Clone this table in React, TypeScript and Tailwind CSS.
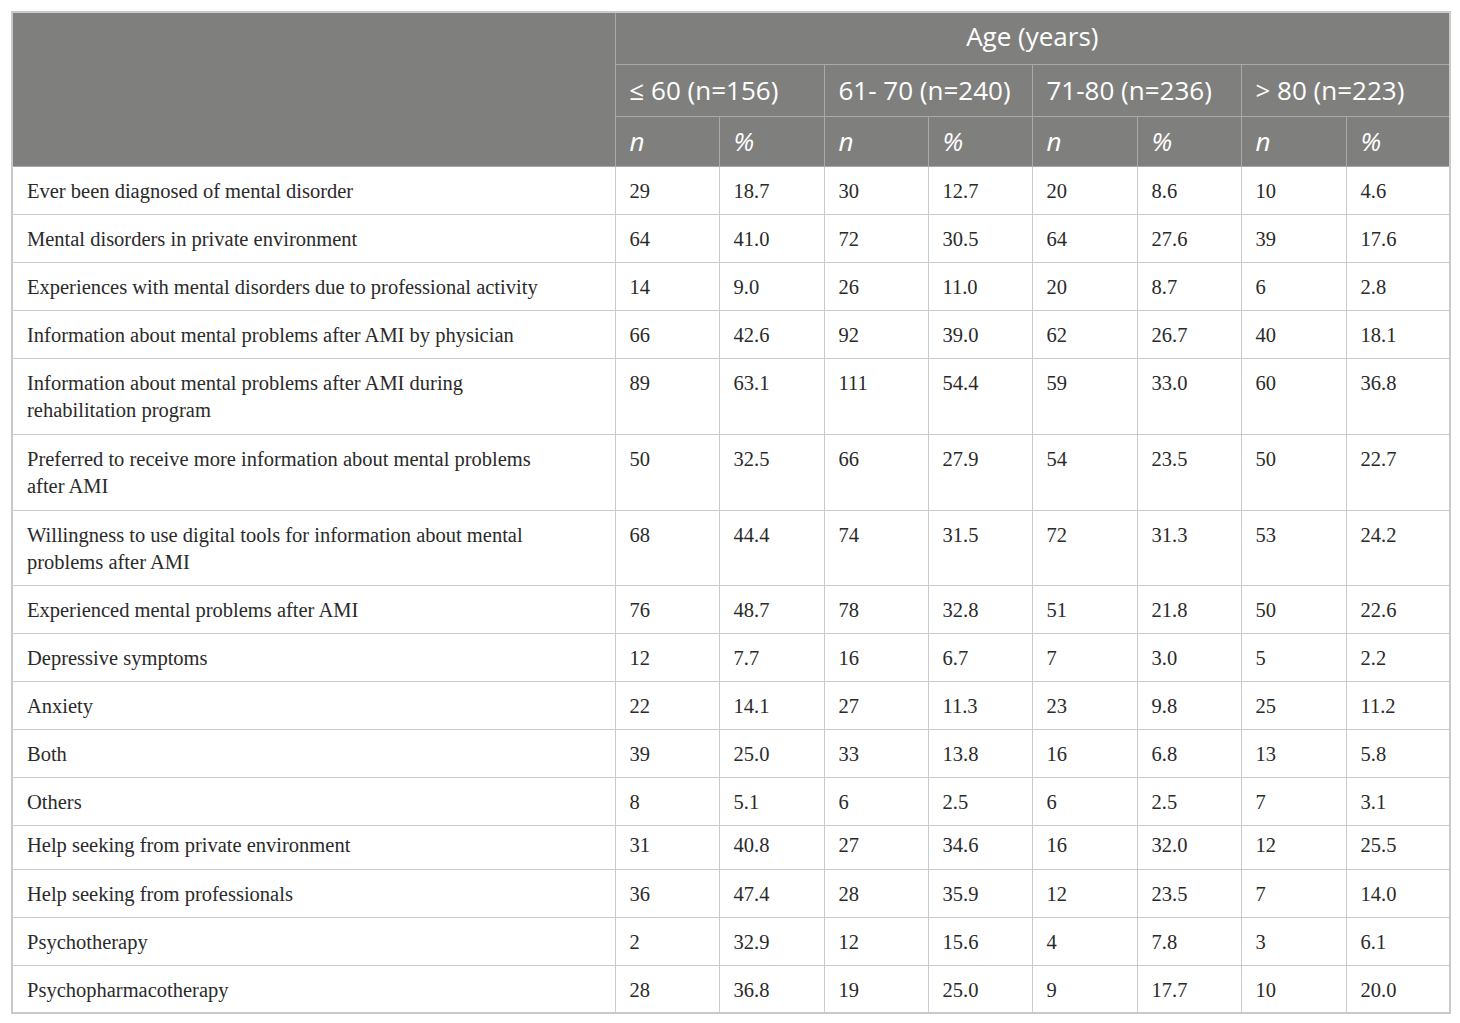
const groups = ['≤ 60 (n=156)', '61- 70 (n=240)', '71-80 (n=236)', '> 80 (n=223)']

type Row = { label: string; values: string[]; h: string; pt?: string }

const ROWS: Row[] = [
  { label: 'Ever been diagnosed of mental disorder', values: ['29', '18.7', '30', '12.7', '20', '8.6', '10', '4.6'], h: 'h-[48px]' },
  { label: 'Mental disorders in private environment', values: ['64', '41.0', '72', '30.5', '64', '27.6', '39', '17.6'], h: 'h-[48px]' },
  { label: 'Experiences with mental disorders due to professional activity', values: ['14', '9.0', '26', '11.0', '20', '8.7', '6', '2.8'], h: 'h-[48px]' },
  { label: 'Information about mental problems after AMI by physician', values: ['66', '42.6', '92', '39.0', '62', '26.7', '40', '18.1'], h: 'h-[48px]' },
  { label: 'Information about mental problems after AMI during rehabilitation program', values: ['89', '63.1', '111', '54.4', '59', '33.0', '60', '36.8'], h: 'h-[76px]' },
  { label: 'Preferred to receive more information about mental problems after AMI', values: ['50', '32.5', '66', '27.9', '54', '23.5', '50', '22.7'], h: 'h-[76px]' },
  { label: 'Willingness to use digital tools for information about mental problems after AMI', values: ['68', '44.4', '74', '31.5', '72', '31.3', '53', '24.2'], h: 'h-[75px]' },
  { label: 'Experienced mental problems after AMI', values: ['76', '48.7', '78', '32.8', '51', '21.8', '50', '22.6'], h: 'h-[48px]' },
  { label: 'Depressive symptoms', values: ['12', '7.7', '16', '6.7', '7', '3.0', '5', '2.2'], h: 'h-[48px]' },
  { label: 'Anxiety', values: ['22', '14.1', '27', '11.3', '23', '9.8', '25', '11.2'], h: 'h-[48px]' },
  { label: 'Both', values: ['39', '25.0', '33', '13.8', '16', '6.8', '13', '5.8'], h: 'h-[48px]' },
  { label: 'Others', values: ['8', '5.1', '6', '2.5', '6', '2.5', '7', '3.1'], h: 'h-[48px]' },
  { label: 'Help seeking from private environment', values: ['31', '40.8', '27', '34.6', '16', '32.0', '12', '25.5'], h: 'h-[44px]', pt: 'pt-[6px]' },
  { label: 'Help seeking from professionals', values: ['36', '47.4', '28', '35.9', '12', '23.5', '7', '14.0'], h: 'h-[48px]' },
  { label: 'Psychotherapy', values: ['2', '32.9', '12', '15.6', '4', '7.8', '3', '6.1'], h: 'h-[48px]' },
  { label: 'Psychopharmacotherapy', values: ['28', '36.8', '19', '25.0', '9', '17.7', '10', '20.0'], h: 'h-[48px]' },
]

const head = 'border border-[#a9aaa8] px-[14px] align-middle font-normal text-white'

export default function App() {
  return (
    <div className="min-h-[1023px] w-[1460px] bg-white pl-[11px] pt-[11px]">
      <table className="w-[1438px] table-fixed border-collapse border-2 border-[#c9c9c9] text-[#2a2a2a]">
        <colgroup>
          <col className="w-[603px]" />
          {[104, 105, 104, 104, 105, 104, 105, 104].map((w, i) => (
            <col key={i} style={{ width: w }} />
          ))}
        </colgroup>
        <thead className="bg-[#7f807e] font-['Open_Sans',sans-serif] text-[26px] leading-[32px]">
          <tr className="h-[52px]">
            <th rowSpan={3} className={head} />
            <th colSpan={8} className={head + ' text-center pb-[4px]'}>Age (years)</th>
          </tr>
          <tr className="h-[52px]">
            {groups.map(g => (
              <th key={g} colSpan={2} className={head + ' text-left whitespace-nowrap'}>{g}</th>
            ))}
          </tr>
          <tr className="h-[50px]">
            {groups.map(g => [
              <th key={g + 'n'} className={head + ' text-left italic'}>n</th>,
              <th key={g + 'p'} className={head + ' text-left italic'}>%</th>,
            ])}
          </tr>
        </thead>
        <tbody className="font-['Liberation_Serif',serif] text-[20.5px] leading-[27px]">
          {ROWS.map(r => (
            <tr key={r.label} className={r.h}>
              <td className={'border border-[#cbcbcb] px-[14px] align-top ' + (r.pt ?? 'pt-[11px]')}>
                <div className="w-[525px]">{r.label}</div>
              </td>
              {r.values.map((v, i) => (
                <td key={i} className={'border border-[#cbcbcb] px-[14px] align-top ' + (r.pt ?? 'pt-[11px]')}>{v}</td>
              ))}
            </tr>
          ))}
        </tbody>
      </table>
    </div>
  )
}
